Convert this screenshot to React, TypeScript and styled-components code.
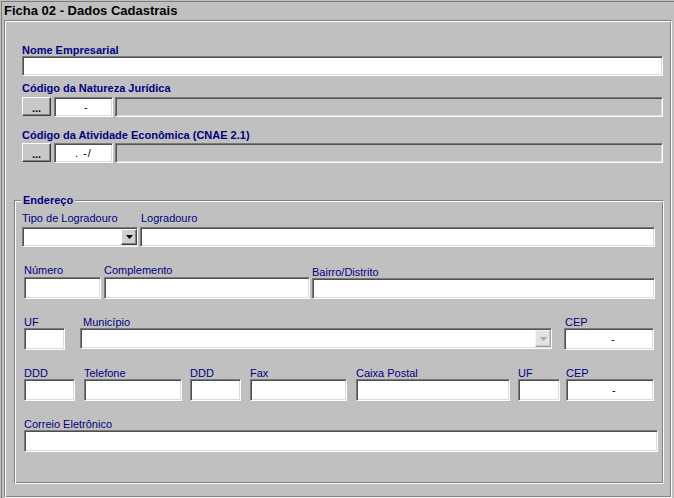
import React from "react";
import styled, { createGlobalStyle } from "styled-components";

const Global = createGlobalStyle`
  html, body { margin: 0; padding: 0; background: #c0c0c0; }
  body { font-family: "Liberation Sans", Arial, sans-serif; }
  * { box-sizing: border-box; }
`;

const FONT = `"Liberation Sans", Arial, sans-serif`;
const NAVY = "#000080";

const Window = styled.div`
  width: 674px;
  height: 498px;
  padding: 1px 0 0 1px;
  display: flex;
  flex-direction: column;
  background: #c0c0c0;
  overflow: hidden;
`;

const Frame = styled.div`
  flex: 1;
  display: flex;
  flex-direction: column;
  border-top: 1px solid #7c7c7c;
  border-left: 1px solid #7c7c7c;
  min-height: 0;
`;

const Title = styled.div`
  height: 18px;
  padding-left: 2px;
  font: bold 13px/18px ${FONT};
  color: #000;
  white-space: nowrap;
`;

const Panel = styled.div`
  flex: 1;
  margin: 0 2px 0 2px;
  border: 1px solid;
  border-color: #808080 #ffffff #ffffff #808080;
  box-shadow: inset 1px 1px #ffffff, inset -1px -1px #808080;
  padding: 23px 0 0 0;
  display: flex;
  flex-direction: column;
`;

const TopSection = styled.div`
  padding: 0 8px 0 17px;
  display: flex;
  flex-direction: column;
`;

const Label = styled.div<{ $bold?: boolean; $mt?: number; $pt?: number; $li?: number }>`
  font: ${(p) => (p.$bold ? "bold " : "")}11px/12px ${FONT};
  color: ${NAVY};
  white-space: nowrap;
  margin-top: ${(p) => p.$mt ?? 0}px;
  padding-top: ${(p) => p.$pt ?? 0}px;
  padding-left: ${(p) => p.$li ?? 0}px;
`;

const TextBox = styled.input<{ $w: number; $h: number; $gray?: boolean; $pad?: number; $mt?: number; $ml?: number; $ls?: number }>`
  display: block;
  width: ${(p) => p.$w}px;
  height: ${(p) => p.$h}px;
  margin: ${(p) => p.$mt ?? 0}px 0 0 ${(p) => p.$ml ?? 0}px;
  padding: 0 0 0 ${(p) => p.$pad ?? 2}px;
  border: 1px solid;
  border-color: #7a7a7a #ffffff #ffffff #7a7a7a;
  box-shadow: inset 1px 1px #505050, inset -1px -1px #dcdcdc;
  background: ${(p) => (p.$gray ? "#c0c0c0" : "#ffffff")};
  font: 11px ${FONT};
  letter-spacing: ${(p) => p.$ls ?? 0}px;
  white-space: pre;
  color: #000;
  outline: none;
  flex: none;
`;

const ControlRow = styled.div<{ $mt: number }>`
  display: flex;
  align-items: flex-start;
  margin-top: ${(p) => p.$mt}px;
`;

const DotsButton = styled.button`
  width: 29px;
  height: 19px;
  margin: 0;
  padding: 3px 0 0 0;
  border: 1px solid;
  border-color: #ffffff #404040 #404040 #ffffff;
  box-shadow: inset -1px -1px #808080;
  background: #c8c8c8;
  font: bold 11px/12px ${FONT};
  color: #000;
  flex: none;
`;

const Group = styled.fieldset`
  margin: 31px 7px 0 9px;
  padding: 0 0 31px 9px;
  border: 1px solid;
  border-color: #808080 #ffffff #ffffff #808080;
  box-shadow: inset 1px 1px #ffffff, inset -1px -1px #808080;
  min-width: 0;
`;

const Legend = styled.legend`
  margin-left: -3px;
  padding: 0 2px;
  font: bold 11px/12px ${FONT};
  color: ${NAVY};
  background: #c0c0c0;
`;

const FieldRow = styled.div<{ $mt: number; $ml?: number }>`
  display: flex;
  align-items: flex-start;
  margin-top: ${(p) => p.$mt}px;
  margin-left: ${(p) => p.$ml ?? 0}px;
`;

const Field = styled.div<{ $w: number; $ml?: number }>`
  display: flex;
  flex-direction: column;
  width: ${(p) => p.$w}px;
  margin-left: ${(p) => p.$ml ?? 0}px;
  flex: none;
`;

const Combo = styled.div<{ $w: number; $h: number; $mt?: number }>`
  width: ${(p) => p.$w}px;
  height: ${(p) => p.$h}px;
  margin-top: ${(p) => p.$mt ?? 0}px;
  padding: 1px 0 1px 0;
  display: flex;
  justify-content: flex-end;
  border: 1px solid;
  border-color: #7a7a7a #ffffff #ffffff #7a7a7a;
  box-shadow: inset 1px 1px #505050, inset -1px -1px #dcdcdc;
  background: #ffffff;
`;

const DropButton = styled.div<{ $disabled?: boolean }>`
  width: 16px;
  height: 100%;
  display: flex;
  align-items: center;
  justify-content: center;
  border: 1px solid;
  border-color: ${(p) => (p.$disabled ? "#f4f4f4 #a0a0a0 #a0a0a0 #f4f4f4" : "#ffffff #404040 #404040 #ffffff")};
  box-shadow: inset -1px -1px ${(p) => (p.$disabled ? "#c8c8c8" : "#808080")};
  background: ${(p) => (p.$disabled ? "#e2e2e2" : "#d0d0d0")};
`;

const Arrow = ({ color }: { color: string }) => (
  <svg width="7" height="4" viewBox="0 0 7 4">
    <polygon points="0,0 7,0 3.5,4" fill={color} />
  </svg>
);

type F = {
  label: string;
  w: number;
  ml?: number;
  li?: number;
  kind?: "text" | "combo" | "comboDisabled";
  value?: string;
  pad?: number;
  pt?: number;
  h?: number;
};

type R = { mt: number; gap: number; h: number; ml?: number; fields: F[] };

const rows: R[] = [
  {
    mt: 6,
    gap: 3,
    h: 20,
    ml: -2,
    fields: [
      { label: "Tipo de Logradouro", w: 116, kind: "combo" },
      { label: "Logradouro", w: 515, ml: 2, li: 1 },
    ],
  },
  {
    mt: 17,
    gap: 1,
    h: 22,
    fields: [
      { label: "Número", w: 77 },
      { label: "Complemento", w: 206, ml: 3 },
      { label: "Bairro/Distrito", w: 343, ml: 2, pt: 2, h: 21 },
    ],
  },
  {
    mt: 17,
    gap: 0,
    h: 22,
    fields: [
      { label: "UF", w: 41 },
      { label: "Município", w: 472, ml: 15, li: 3, kind: "comboDisabled" },
      { label: "CEP", w: 90, ml: 12, li: 1, value: "-", pad: 46 },
    ],
  },
  {
    mt: 17,
    gap: 0,
    h: 22,
    fields: [
      { label: "DDD", w: 51 },
      { label: "Telefone", w: 98, ml: 9 },
      { label: "DDD", w: 51, ml: 8 },
      { label: "Fax", w: 97, ml: 9 },
      { label: "Caixa Postal", w: 154, ml: 9 },
      { label: "UF", w: 42, ml: 8 },
      { label: "CEP", w: 88, ml: 6, value: "-", pad: 45 },
    ],
  },
  {
    mt: 17,
    gap: 0,
    h: 22,
    fields: [{ label: "Correio Eletrônico", w: 634 }],
  },
];

const renderControl = (f: F, r: R) => {
  const h = f.h ?? r.h;
  const mt = f.pt ? Math.max(0, r.gap - f.pt + 1) : r.gap;
  if (f.kind === "combo" || f.kind === "comboDisabled") {
    const dis = f.kind === "comboDisabled";
    return (
      <Combo $w={f.w} $h={dis ? h - 1 : h} $mt={mt}>
        <DropButton $disabled={dis}>
          <Arrow color={dis ? "#a8a8a8" : "#000"} />
        </DropButton>
      </Combo>
    );
  }
  return <TextBox readOnly $w={f.w} $h={h} $mt={mt} $pad={f.pad} value={f.value ?? ""} />;
};

export default function App() {
  return (
    <>
      <Global />
      <Window>
        <Frame>
          <Title>Ficha 02 - Dados Cadastrais</Title>
          <Panel>
            <TopSection>
              <Label $bold>Nome Empresarial</Label>
              <TextBox readOnly $w={641} $h={20} value="" />

              <Label $bold $mt={6}>Código da Natureza Jurídica</Label>
              <ControlRow $mt={3}>
                <DotsButton>...</DotsButton>
                <TextBox readOnly $w={59} $h={20} $ml={3} $pad={29} value="-" />
                <TextBox readOnly $gray $w={548} $h={20} $ml={2} value="" />
              </ControlRow>

              <Label $bold $mt={12}>Código da Atividade Econômica (CNAE 2.1)</Label>
              <ControlRow $mt={2}>
                <DotsButton>...</DotsButton>
                <TextBox readOnly $w={59} $h={20} $ml={3} $pad={20} $ls={1} value=". -/" />
                <TextBox readOnly $gray $w={548} $h={20} $ml={2} value="" />
              </ControlRow>
            </TopSection>

            <Group>
              <Legend>Endereço</Legend>
              {rows.map((r, i) => (
                <FieldRow key={i} $mt={r.mt} $ml={r.ml}>
                  {r.fields.map((f, j) => (
                    <Field key={j} $w={f.w} $ml={f.ml}>
                      <Label $li={f.li} $pt={f.pt}>{f.label}</Label>
                      {renderControl(f, r)}
                    </Field>
                  ))}
                </FieldRow>
              ))}
            </Group>
          </Panel>
        </Frame>
      </Window>
    </>
  );
}
